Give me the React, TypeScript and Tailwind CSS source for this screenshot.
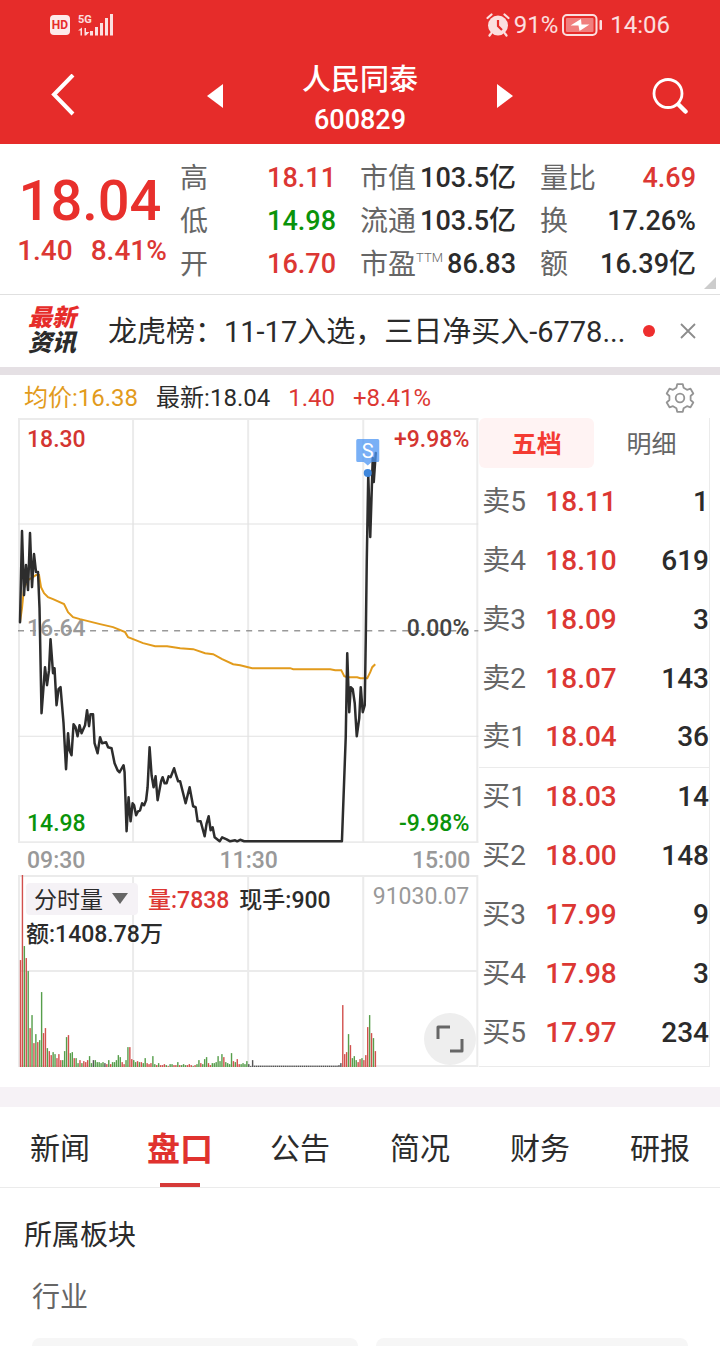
import { useState } from 'react';

interface Stat {
  label: string;
  sup?: string;
  value: string;
  color: string;
}

interface Level {
  name: string;
  price: string;
  volume: string;
}

const RED = 'text-[#dc3733]';
const GREEN = 'text-[#0a930a]';
const DARK = 'text-[#2b2b2b]';

const statColumns: Stat[][] = [
  [
    { label: '高', value: '18.11', color: RED },
    { label: '低', value: '14.98', color: GREEN },
    { label: '开', value: '16.70', color: RED },
  ],
  [
    { label: '市值', value: '103.5亿', color: DARK },
    { label: '流通', value: '103.5亿', color: DARK },
    { label: '市盈', sup: 'TTM', value: '86.83', color: DARK },
  ],
  [
    { label: '量比', value: '4.69', color: RED },
    { label: '换', value: '17.26%', color: DARK },
    { label: '额', value: '16.39亿', color: DARK },
  ],
];

const levels: Level[] = [
  { name: '卖5', price: '18.11', volume: '1' },
  { name: '卖4', price: '18.10', volume: '619' },
  { name: '卖3', price: '18.09', volume: '3' },
  { name: '卖2', price: '18.07', volume: '143' },
  { name: '卖1', price: '18.04', volume: '36' },
  { name: '买1', price: '18.03', volume: '14' },
  { name: '买2', price: '18.00', volume: '148' },
  { name: '买3', price: '17.99', volume: '9' },
  { name: '买4', price: '17.98', volume: '3' },
  { name: '买5', price: '17.97', volume: '234' },
];

const tabs = ['新闻', '盘口', '公告', '简况', '财务', '研报'];

const pricePoints =
  '2,204 4,113 6,177 8,147 10,172 12,115 14,169 16,136 18,154 20,154 21.5,190 23.5,295 27,249 29,267 31,252 32.5,221 35,255 36.5,250 38.5,287 40.5,271 42.5,269 45.5,305 48,351 50,315 51.5,332 53.5,337 55.5,306 57.5,309 59.5,318 61.5,307 63.5,315 67,307 69,292 71,308 72.5,296 75,296 76.5,325 79.5,335 82,319 84,325 88,324 90,329 93.5,330 96.5,345 99.5,352 101.5,354 105.5,347 106.5,354 108.5,413 110.5,379 112.5,403 114.5,385 116,387 118,397 120,393 122,392 124,385 126,387 128,382 129.5,369 131.5,329 133.5,357 135.5,369 137.5,358 139.5,382 143,363 144.5,359 146.5,365 148.5,365 150.5,358 152.5,359 156,350 158,357 160,363 162,363 167.5,385 171.5,369 175,388 177.5,389 179.5,403 182.5,403 186.5,418 188.5,405 190.5,398 192.5,412 194.5,409 196.5,419 201.5,423 204,419 208.5,421 212,423 217,422 219,423 222,421.5 226,423 323.7,423 327.5,319 329,235 331,294 332.5,269 334.5,271 336.5,285 338.5,318 341,300 342.5,269 344.5,294 346.5,287 347.5,222 348.5,144 350,57 352,119 353.5,72 354.5,40 355.5,64 357.5,35';

const averagePoints =
  '2,204 4,190 6,170 10,162 18,157 21,157 23,169 26,175 30,179 35,181 46,186 50,194 55,199 62,201 82,206 95,209 107,214 110,219 115,221 125,225 137,228 149,228 162,230 175,231 187,235 195,236 204,241 215,246 222,247 234,250 272,250 275,251 312,251 317,252 323,252 326,258 329,259 339,259 342,260 349,260 352,254 354,249 357,246';

// r = up minute, g = down minute, k = unchanged; the number is the bar height
const openingBars =
  'r107 r192 g121 r109 g96 r39 g52 r24 g33 r25 g27 g75 r34 r39 g19 r16 r12 g15 g13 r9 r13 r7 g7 g16 g30 r32 g14 g15 r9 g9 g4 r7 g4 r6 r5 r7 g11 g4 k7 g7 g5 g5 g4 g5 k4 r3 g7 r3 g5 g5 g7 g12 g10 r5 r3 g7 g20 r20 r8 g7 g5 r6 g5 r5 g4 g9 r4 r3 r4 g11 g3 r2 g4 r2 r2 r3 g2 r1 g3 g3 r2 r2 g5 r2 g2 g3 g2 r2 r3 r2 g1 r2 g3 g7 r4 g3 g8 g10 r4 r2 g4 g4 g5 g11 g6 g13 r10 g5 g4 g3 g14 r6 g5 r8 r3 g3 g4 g3 g6 k3 k1 k7';
const closingBars =
  'k2 k4 r62 r13 r15 g33 r22 g9 g11 g7 r5 r8 g9 r7 r12 r40 g52 r34 g29 r16';
const haltedBars = Array(44).fill('k1.5');
const bars = [...openingBars.split(' '), ...haltedBars, ...closingBars.split(' ')];

const barColors: Record<string, string> = { r: '#d2504d', g: '#569e4b', k: '#555555' };

function StatusBar() {
  return (
    <div className="flex h-12 items-center justify-between pl-[50px] pr-[50px] pt-0.5 text-white/85">
      <div className="flex items-center gap-2">
        <span className="flex h-5 w-5 items-center justify-center rounded bg-white/90 text-xs font-bold text-[#e62c2a]">
          HD
        </span>
        <svg className="h-6 w-9" viewBox="0 0 36 24" fill="currentColor">
          <text x="0" y="10" fontSize="11" fontWeight="700">5G</text>
          <path d="M0 17.500 L4 14.500 V22.500 H2.500 V17.500Z M6.500 15 H8 V19 H11.500 L8 22.500 H6.500Z" />
          <rect x="12" y="18" width="3" height="4.500" />
          <rect x="17" y="14" width="3" height="8.500" />
          <rect x="22" y="10" width="3" height="12.500" />
          <rect x="27" y="5" width="3" height="17.500" />
          <rect x="32" y="1" width="3" height="21.500" />
        </svg>
      </div>
      <div className="flex items-center gap-1 text-2xl">
        <svg className="h-6 w-6" viewBox="0 0 24 24">
          <circle cx="12" cy="12.500" r="10" fill="currentColor" />
          <path d="M1.500 5 L5.500 1.500 M22.500 5 L18.500 1.500 M5 20.500 L3.500 22.500 M19 20.500 L20.500 22.500" stroke="currentColor" strokeWidth="2.200" strokeLinecap="round" />
          <path d="M12 7 V13 L16 17" fill="none" stroke="#e62c2a" strokeWidth="2.200" />
        </svg>
        <span>91%</span>
        <svg className="mr-1 h-[22px] w-10" viewBox="0 0 40 22">
          <rect x="1" y="1" width="33.500" height="20" rx="4" fill="none" stroke="currentColor" strokeWidth="2" />
          <rect x="4" y="4" width="27.500" height="14" rx="1" fill="#f07f7e" />
          <path d="M19 5 L8.500 11.500 H16.500 L17.500 17 L27.500 10.500 H19.500Z" fill="#fff" />
          <rect x="37.500" y="6" width="2.500" height="10" rx="1" fill="currentColor" />
        </svg>
        <span>14:06</span>
      </div>
    </div>
  );
}

function Header() {
  return (
    <header className="bg-[#e62c2a] text-white">
      <StatusBar />
      <div className="flex h-24 items-center justify-between px-8">
        <button type="button" aria-label="返回" className="flex w-16 justify-center">
          <svg className="h-11 w-7" viewBox="0 0 28 44" fill="none" stroke="currentColor" strokeWidth="4">
            <path d="M23 1 L4 20.500 L23 40" />
          </svg>
        </button>
        <div className="flex w-[306px] items-center justify-between">
          <button type="button" aria-label="上一只">
            <svg className="h-6 w-4" viewBox="0 0 16 24" fill="currentColor">
              <path d="M16 0 V24 L0 12Z" />
            </svg>
          </button>
          <h1 className="pt-2 text-center font-medium">
            <span className="block text-[29px] leading-10">人民同泰</span>
            <span className="block text-[27px] leading-10">600829</span>
          </h1>
          <button type="button" aria-label="下一只">
            <svg className="h-6 w-4" viewBox="0 0 16 24" fill="currentColor">
              <path d="M0 0 V24 L16 12Z" />
            </svg>
          </button>
        </div>
        <button type="button" aria-label="搜索" className="flex w-16 justify-end">
          <svg className="h-9 w-9" viewBox="0 0 36 36" fill="none" stroke="currentColor">
            <circle cx="16" cy="15.500" r="14" strokeWidth="2.800" />
            <path d="M26.500 26.500 L33.500 33.500" strokeWidth="4.500" strokeLinecap="round" />
          </svg>
        </button>
      </div>
    </header>
  );
}

function Quote() {
  return (
    <section className="relative grid h-[151px] grid-cols-4 border-b border-[#e0e0e0]">
      <div className={`flex flex-col items-center pt-7 font-medium ${RED}`}>
        <strong className="text-[56px] font-medium leading-[58px] text-[#e8302c]">18.04</strong>
        <div className="flex gap-[18px] pl-1 text-[28px] leading-[42px]">
          <span>1.40</span>
          <span>8.41%</span>
        </div>
      </div>
      {statColumns.map((column, i) => (
        <dl key={i} className="pr-6 pt-[13px]">
          {column.map(s => (
            <div key={s.label} className="flex h-[43px] items-center justify-between whitespace-nowrap">
              <dt className="flex text-[28px] text-[#666]">
                {s.label}
                {s.sup && <sup className="top-0 pt-1 text-[13px] font-light leading-5">{s.sup}</sup>}
              </dt>
              <dd className={`text-[27px] font-medium ${s.color}`}>{s.value}</dd>
            </div>
          ))}
        </dl>
      ))}
      <svg className="absolute bottom-[5px] right-1 h-3 w-3" viewBox="0 0 12 12">
        <path d="M12 0 V12 H0Z" fill="#ccc" />
      </svg>
    </section>
  );
}

function NewsBar() {
  return (
    <section className="flex h-[72px] items-center px-6">
      <p className="w-[84px] pl-1 text-2xl font-black italic leading-[25px] text-[#2b2b2b]">
        <span className="text-[#e62c2a]">最新</span>
        <br />
        资讯
      </p>
      <a href="#news" className="min-w-0 flex-1 truncate pt-1 text-[29px] text-[#2b2b2b]">
        龙虎榜：11-17入选，三日净买入-6778...
      </a>
      <span className="ml-4 mr-[25px] h-3 w-3 shrink-0 rounded-full bg-[#ee2e2e]" />
      <button type="button" aria-label="关闭">
        <svg className="h-4 w-4" viewBox="0 0 16 16" stroke="#8c8c8c" strokeWidth="1.800">
          <path d="M1 1 L15 15 M15 1 L1 15" />
        </svg>
      </button>
    </section>
  );
}

function PriceChart() {
  return (
    <svg className="block h-auto w-full text-[23px] font-medium" viewBox="0 0 461 425">
      <g stroke="#ebebeb" strokeWidth="2">
        <path d="M1 1 H460 M1 424 H460" />
        <path d="M1 0 V425 M115 0 V425 M230 0 V425 M345 0 V425 M459 0 V425" />
        <path d="M0 106 H460 M0 318 H460" strokeWidth="1" stroke="#e2e2e2" />
      </g>
      <path d="M0 212.500 H460" stroke="#999" strokeWidth="1.500" strokeDasharray="6 6" />
      <text x="9" y="218" fill="#999">16.64</text>
      <polyline points={averagePoints} fill="none" stroke="#e29b1c" strokeWidth="2" />
      <polyline points={pricePoints} fill="none" stroke="#2d2d2d" strokeWidth="2.500" strokeLinejoin="round" strokeLinecap="round" />
      <text x="9" y="29" fill="#d43531">18.30</text>
      <text x="9" y="413" fill="#0a930a">14.98</text>
      <text x="451" y="29" textAnchor="end" fill="#d43531">+9.98%</text>
      <text x="451" y="218" textAnchor="end" fill="#444">0.00%</text>
      <text x="451" y="413" textAnchor="end" fill="#0a930a">-9.98%</text>
      <path d="M339.500 21 H359.500 Q361 21 361 22.500 V42.500 Q361 44 359.500 44 H353.500 L349.500 47.500 L345.500 44 H339.500 Q338 44 338 42.500 V22.500 Q338 21 339.500 21Z" fill="#4c95f3" fillOpacity="0.75" />
      <circle cx="349.500" cy="55" r="4" fill="#3f87dc" />
      <text x="349.500" y="40" textAnchor="middle" fill="#fff" fontSize="20" fontWeight="400">S</text>
    </svg>
  );
}

function VolumeChart() {
  return (
    <div className="relative text-[23px]">
      <svg className="block h-auto w-full" viewBox="0 0 461 192">
        <path
          d="M0 1 H460 M0 96 H460 M0 191 H460 M1 0 V192 M115 0 V192 M230 0 V192 M345 0 V192 M459 0 V192"
          stroke="#ebebeb"
          strokeWidth="2"
        />
        {bars.map((bar, i) => {
          const h = Number(bar.slice(1));
          return (
            <rect key={i} x={1.8 + i * 1.917} y={192 - h} width="1.400" height={h} fill={barColors[bar[0]]} />
          );
        })}
        <text x="451" y="29" textAnchor="end" fill="#999">91030.07</text>
      </svg>
      <div className="absolute left-2 top-2 text-[#2b2b2b]">
        <div className="flex h-8 items-center gap-2.5">
          <div className="relative">
            <select aria-label="指标" className="block h-8 w-28 appearance-none rounded bg-[#f5f2f6] pl-2 pt-1 leading-7">
              <option>分时量</option>
            </select>
            <svg className="pointer-events-none absolute right-2.5 top-2.5 h-3 w-4" viewBox="0 0 16 12">
              <path d="M0 0 H16 L8 11Z" fill="#666" />
            </svg>
          </div>
          <span className={`pt-1 font-medium ${RED}`}>量:7838</span>
          <span className="pt-1 font-medium">现手:900</span>
        </div>
        <div className="pt-1 font-medium leading-8">额:1408.78万</div>
      </div>
      <button
        type="button"
        aria-label="全屏"
        className="absolute bottom-0.5 right-[3px] flex h-13 w-13 items-center justify-center rounded-full bg-[#eee]"
      >
        <svg className="h-7 w-7" viewBox="0 0 28 28" fill="none" stroke="#666" strokeWidth="3" strokeLinejoin="round">
          <path d="M2 14 V2 H14 M26 14 V26 H14" />
        </svg>
      </button>
    </div>
  );
}

function OrderBook() {
  const [detail, setDetail] = useState(false);

  return (
    <div className="border-b border-r border-[#ebebeb]">
      <div className="mb-1 grid h-[50px] grid-cols-2 text-[25px]">
        <button
          type="button"
          onClick={() => setDetail(false)}
          className={detail ? 'pt-1 text-[#666]' : 'rounded-md bg-[#fff3f3] pt-1 font-bold text-[#f43b32]'}
        >
          五档
        </button>
        <button
          type="button"
          onClick={() => setDetail(true)}
          className={detail ? 'rounded-md bg-[#fff3f3] pt-1 font-bold text-[#f43b32]' : 'pt-1 text-[#666]'}
        >
          明细
        </button>
      </div>
      <table className="w-full border-collapse text-[28px]">
        <tbody>
          {levels.map((level, i) => (
            <tr key={level.name} className={i === 5 ? 'h-[59px] border-t border-[#ebebeb]' : 'h-[59px]'}>
              <th scope="row" className="w-16 p-0 pl-[3px] text-left font-normal text-[#666]">
                {level.name}
              </th>
              <td className={`p-0 pl-0.5 font-medium ${RED}`}>{level.price}</td>
              <td className="p-0 text-right font-medium text-[#2b2b2b]">{level.volume}</td>
            </tr>
          ))}
        </tbody>
      </table>
    </div>
  );
}

function Market() {
  return (
    <section className="border-t-8 border-[#e5e0e4] pb-5 pl-[18px] pr-2.5">
      <div className="flex h-[43px] items-center gap-[18px] pl-1.5 pr-3.5 pt-0.5 text-2xl">
        <span className="text-[#e29b1c]">均价:16.38</span>
        <span className="text-[#2b2b2b]">最新:18.04</span>
        <span className={RED}>1.40</span>
        <span className={RED}>+8.41%</span>
        <button type="button" aria-label="设置" className="ml-auto">
          <svg className="h-8 w-8" viewBox="-1 -1 32 32" fill="none" stroke="#949494" strokeWidth="1.800" strokeLinejoin="round">
            <path d="M11.400 4.800 L12.200 1.200 H17.800 L18.600 4.800 L22 6.800 L25.500 5.700 L28.300 10.500 L25.600 13 V17 L28.300 19.500 L25.500 24.300 L22 23.200 L18.600 25.200 L17.800 28.800 H12.200 L11.400 25.200 L8 23.200 L4.500 24.300 L1.700 19.500 L4.400 17 V13 L1.700 10.500 L4.500 5.700 L8 6.800Z" />
            <circle cx="15" cy="15" r="4.300" />
          </svg>
        </button>
      </div>
      <div className="grid grid-cols-3">
        <div className="col-span-2">
          <PriceChart />
          <div className="flex justify-between px-[9px] pt-1 text-[23px] font-medium leading-7 text-[#999]">
            <span>09:30</span>
            <span>11:30</span>
            <span>15:00</span>
          </div>
          <VolumeChart />
        </div>
        <OrderBook />
      </div>
    </section>
  );
}

function Details() {
  const [active, setActive] = useState('盘口');

  return (
    <section className="border-t-[20px] border-[#f6f2f6]">
      <nav className="grid h-[81px] grid-cols-6 border-b border-[#ebebeb]">
        {tabs.map(tab => (
          <button
            key={tab}
            type="button"
            onClick={() => setActive(tab)}
            className={`relative pt-1 ${tab === active ? 'text-[33px] font-bold text-[#e0322e]' : 'text-3xl text-[#2b2b2b]'}`}
          >
            {tab}
            {tab === active && <span className="absolute inset-x-10 bottom-0 h-1 bg-[#d63a38]" />}
          </button>
        ))}
      </nav>
      <h2 className="px-6 pt-7 text-[28px] leading-10 text-[#2b2b2b]">所属板块</h2>
      <h3 className="px-8 pt-[22px] text-[28px] leading-10 text-[#666]">行业</h3>
      <div className="grid grid-cols-[23fr_22fr] gap-[18px] px-8 pt-5">
        <div className="h-2 rounded-t-lg bg-[#f6f6f6]" />
        <div className="h-2 rounded-t-lg bg-[#f6f6f6]" />
      </div>
    </section>
  );
}

export default function App() {
  return (
    <main lang="zh-CN" className="bg-white font-['Roboto','Noto_Sans_CJK_SC',sans-serif]">
      <Header />
      <Quote />
      <NewsBar />
      <Market />
      <Details />
    </main>
  );
}
